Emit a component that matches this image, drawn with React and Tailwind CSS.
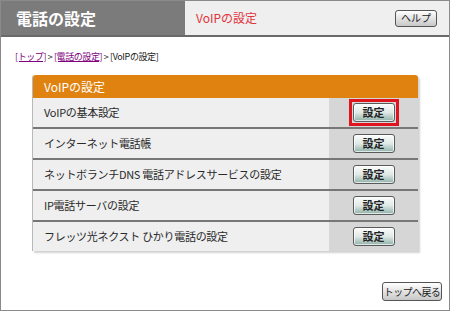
import React from "react";

const JP = { fontFamily: '"Noto Sans CJK JP", "Noto Sans", sans-serif' };

function SetBtn() {
  return (
    <button className="w-[42px] h-[19px] rounded-[3px] border border-[#5a5a5a] bg-gradient-to-b from-[#fbfdfc] via-[#dfe9e6] to-[#8fb2a9] text-[11px] leading-none text-[#222] font-bold shadow-[inset_0_0_0_1px_rgba(255,255,255,0.7)] flex items-center justify-center">
      設定
    </button>
  );
}

const rows = [
  "VoIPの基本設定",
  "インターネット電話帳",
  "ネットボランチDNS 電話アドレスサービスの設定",
  "IP電話サーバの設定",
  "フレッツ光ネクスト ひかり電話の設定",
];

export default function App() {
  return (
    <div style={JP} className="w-[450px] h-[311px] border border-[#8a8a8a] bg-white flex flex-col overflow-hidden">
      <div className="h-[36px] flex border-b-2 border-[#6a6a6a] shrink-0">
        <div className="w-[184px] bg-[#7b7b7b] flex items-center pl-[15px] text-white font-bold text-[16px] leading-none">
          電話の設定
        </div>
        <div className="flex-1 bg-[#efefef] flex items-center pl-[11px] pr-[12px]">
          <span className="text-[12px] text-[#e0343c] leading-none">VoIPの設定</span>
          <button className="ml-auto w-[42px] h-[17px] rounded-[3px] border border-[#555] bg-gradient-to-b from-white to-[#c8c8c8] text-[10px] leading-none text-[#222] flex items-center justify-center">
            ヘルプ
          </button>
        </div>
      </div>

      <div className="pl-[14px] pt-[15px] text-[9px] leading-none text-[#222] tracking-[-0.4px] whitespace-pre">
        <a className="text-[#800080] underline">[トップ]</a>{" > "}
        <a className="text-[#800080] underline">[電話の設定]</a>{" > [VoIPの設定]"}
      </div>

      <div className="ml-[31px] mt-[14px] w-[386px] rounded-t-[3px] bg-[#efefef] shadow-[2px_2px_2px_rgba(0,0,0,0.18)] border-l border-[#b8b8b8]">
        <div className="h-[23px] bg-[#e0820f] rounded-t-[3px] flex items-center pl-[11px] text-[12px] text-white leading-none">
          VoIPの設定
        </div>
        {rows.map((r, i) => (
          <div
            key={i}
            className={
              "flex " +
              (i < rows.length - 1 ? "h-[31px] border-b-2 border-[#777]" : "h-[29px]")
            }
          >
            <div className="flex-1 flex items-center pl-[11px] text-[11px] text-[#2a2a2a] leading-none tracking-[-0.3px]">
              {r}
            </div>
            <div className="w-[89px] bg-[#d6d6d6] flex items-center justify-center">
              {i === 0 ? (
                <div className="border-[3px] border-[#e0141e] p-[1px]">
                  <SetBtn />
                </div>
              ) : (
                <SetBtn />
              )}
            </div>
          </div>
        ))}
      </div>

      <div className="flex justify-end pr-[7px] mt-auto mb-[9px]">
        <button className="w-[60px] h-[19px] rounded-[3px] border border-[#555] bg-gradient-to-b from-white to-[#c8c8c8] text-[10px] leading-none text-[#222] tracking-[-0.6px] flex items-center justify-center">
          トップへ戻る
        </button>
      </div>
    </div>
  );
}
